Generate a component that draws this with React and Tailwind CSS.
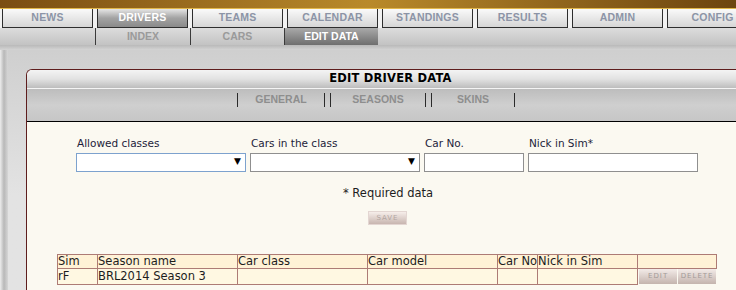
import React from "react";

const mainTabs = ["NEWS", "DRIVERS", "TEAMS", "CALENDAR", "STANDINGS", "RESULTS", "ADMIN", "CONFIG"];
const subTabs = [
  { label: "", w: "w-[95px]" },
  { label: "INDEX", w: "w-[95px]" },
  { label: "CARS", w: "w-[94px]" },
  { label: "EDIT DATA", w: "w-[94px]", active: true },
];
const panelTabs = [
  { label: "GENERAL", w: "w-[88px]" },
  { label: "SEASONS", w: "w-[96px]" },
  { label: "SKINS", w: "w-[84px]" },
];

const SelectBox = ({ focused }) => (
  <div
    className={
      "relative h-[19px] w-[170px] bg-white border " +
      (focused ? "border-[#7da2ce]" : "border-[#8f8f8f]")
    }
  >
    <span className="absolute right-[4px] top-[3px] text-[9px] leading-none text-black">▼</span>
  </div>
);

const Field = ({ label, children }) => (
  <div className="flex flex-col">
    <span className="text-[10.5px] leading-[12px] mb-[4px] pl-[1px] text-[#1d1d3a]">{label}</span>
    {children}
  </div>
);

export default function App() {
  return (
    <div
      className="relative w-[736px] h-[290px] overflow-hidden bg-[#dedede]"
      style={{ fontFamily: "'DejaVu Sans', Verdana, sans-serif" }}
    >
      {/* banner strip */}
      <div className="h-[9px] bg-gradient-to-r from-[#7a4d12] via-[#b98a2a] to-[#6d4510] border-b border-[#e2b74a]" />

      {/* main menu */}
      <div
        className="flex h-[19px] bg-[#efefef]"
        style={{ fontFamily: "'Liberation Sans', Arial, sans-serif" }}
      >
        {mainTabs.map((t, i) => (
          <div key={t} className="w-[95px] shrink-0 px-[2px] bg-[#f2f2f2]">
            <div
              className={
                "h-full flex items-center justify-center border-x border-b border-[#2e2e2e] text-[10.5px] font-bold tracking-[0.2px] " +
                (i === 1
                  ? "bg-gradient-to-b from-[#e6e6e6] via-[#a3a3a3] to-[#8a8a8a] text-white"
                  : "bg-gradient-to-b from-[#fafafa] to-[#d6d6d6] text-[#8c94a6]")
              }
            >
              {t}
            </div>
          </div>
        ))}
      </div>

      {/* sub menu */}
      <div
        className="flex h-[17px] bg-gradient-to-b from-[#dcdcdc] to-[#c3c3c3]"
        style={{ fontFamily: "'Liberation Sans', Arial, sans-serif" }}
      >
        {subTabs.map((s, i) => (
          <div
            key={i}
            className={
              s.w +
              " shrink-0 flex items-center justify-center text-[10.5px] font-bold " +
              (i > 0 ? "border-l border-[#3a3a3a] " : "") +
              (s.active
                ? "bg-gradient-to-b from-[#a9a9a9] to-[#6f6f6f] text-white"
                : "text-[#9a9a9a]")
            }
          >
            {s.label}
          </div>
        ))}
      </div>

      {/* grey band under the menu */}
      <div className="h-[5px] bg-gradient-to-b from-[#b9b9b9] to-[#d4d4d4]" />

      {/* page body */}
      <div className="flex h-full">
        <div className="w-[8px] shrink-0 bg-gradient-to-r from-[#ededed] via-[#b8b8b8] to-[#d6d6d6]" />
        <div className="flex-1 pt-[19px] pl-[18px] bg-gradient-to-b from-[#cfcfcf] via-[#e3e3e3] to-[#e3e3e3]">
          <div className="w-[728px] border-l border-t border-[#5e1d1d] rounded-tl-[6px] bg-[#fbf9f1] overflow-hidden">
            {/* panel header */}
            <div className="h-[19px] flex items-center justify-center bg-gradient-to-b from-[#f4f4f4] via-[#e2e2e2] to-[#bdbdbd] border-b border-[#f4f4f4]">
              <span className="text-[11.5px] font-bold text-black tracking-[0.2px]">
                EDIT DRIVER DATA
              </span>
            </div>

            {/* panel tabs */}
            <div
              className="h-[33px] flex gap-[5px] pl-[210px] pt-[4px] bg-gradient-to-b from-[#bdbdbd] via-[#cfcfcf] to-[#c6c6c6] border-b border-black"
              style={{ fontFamily: "'Liberation Sans', Arial, sans-serif" }}
            >
              {panelTabs.map((p) => (
                <div
                  key={p.label}
                  className={p.w + " h-[14px] flex items-center justify-center border-x border-[#2a2a2a] text-[10.5px] font-bold text-[#8e8e8e]"}
                >
                  {p.label}
                </div>
              ))}
            </div>

            {/* form */}
            <div className="pt-[15px] pl-[49px] flex gap-[4px] items-end">
              <Field label="Allowed classes">
                <SelectBox focused />
              </Field>
              <Field label="Cars in the class">
                <SelectBox />
              </Field>
              <Field label="Car No.">
                <div className="h-[19px] w-[100px] bg-white border border-[#8f8f8f]" />
              </Field>
              <Field label="Nick in Sim*">
                <div className="h-[19px] w-[170px] bg-white border border-[#8f8f8f]" />
              </Field>
            </div>

            <div className="mt-[13px] w-[722px] text-center text-[11.5px] text-[#1d1d1d]">* Required data</div>

            <div className="mt-[9px] w-[722px] flex justify-center">
              <button className="h-[14px] w-[39px] ml-[-1px] flex items-center justify-center bg-gradient-to-b from-[#f6eeea] to-[#c8b6b0] border border-[#e3d6d2] text-[7px] tracking-[1px] text-[#b2a6a2]">
                SAVE
              </button>
            </div>

            {/* seasons table */}
            <div className="mt-[29px] pl-[30px] pb-[20px]">
              <table className="border-collapse text-[11.5px] leading-[13px] text-[#1d1d1d]">
                <tbody>
                  <tr className="bg-[#fff2d6]">
                    {[
                      ["Sim", "w-[40px]"],
                      ["Season name", "w-[140px]"],
                      ["Car class", "w-[130px]"],
                      ["Car model", "w-[130px]"],
                      ["Car No", "w-[40px]"],
                      ["Nick in Sim", "w-[100px]"],
                      ["", "w-[79px]"],
                    ].map(([h, w], i) => (
                      <td key={i} className={w + " h-[14px] p-0 border border-[#ad7b75] whitespace-nowrap overflow-hidden"}>
                        {h}
                      </td>
                    ))}
                  </tr>
                  <tr className="bg-[#fff8e2]">
                    <td className="h-[15px] p-0 border border-[#ad7b75]">rF</td>
                    <td className="p-0 border border-[#ad7b75]">BRL2014 Season 3</td>
                    <td className="p-0 border border-[#ad7b75]"></td>
                    <td className="p-0 border border-[#ad7b75]"></td>
                    <td className="p-0 border border-[#ad7b75]"></td>
                    <td className="p-0 border border-[#ad7b75]"></td>
                    <td className="p-0 bg-[#fbf9f1] border-t border-[#ad7b75]">
                      <div className="flex gap-[1px] pl-[1px]">
                        <button className="h-[15px] w-[38px] flex items-center justify-center bg-gradient-to-b from-[#f3ebe8] to-[#c4b4ae] text-[7px] tracking-[1px] text-[#a39a98]">
                          EDIT
                        </button>
                        <button className="h-[15px] w-[38px] flex items-center justify-center bg-gradient-to-b from-[#f3ebe8] to-[#c4b4ae] text-[7px] tracking-[1px] text-[#a39a98]">
                          DELETE
                        </button>
                      </div>
                    </td>
                  </tr>
                </tbody>
              </table>
            </div>
          </div>
        </div>
      </div>
    </div>
  );
}
